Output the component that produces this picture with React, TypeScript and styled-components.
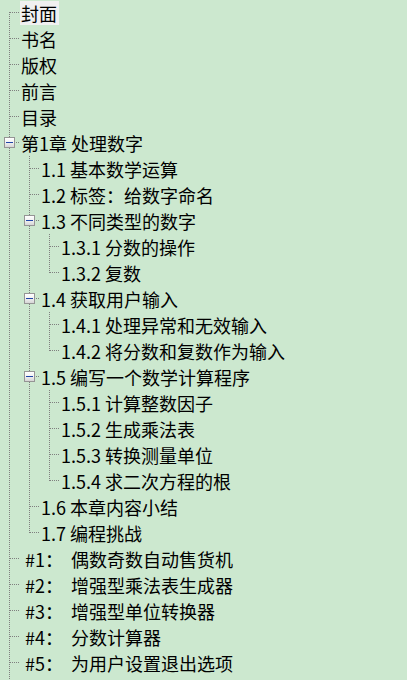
import React from "react";
import styled, { createGlobalStyle, css } from "styled-components";

type TreeNode = {
  label: string;
  children?: TreeNode[];
  expanded?: boolean;
  selected?: boolean;
};

type GuideKind = "blank" | "pipe" | "first" | "tee" | "elbow";

const ROW = 26;
const INDENT = 20;
const LINE_X = 9;
const DOT = "#7f7f7f";

const GlobalStyle = createGlobalStyle`
  html, body {
    margin: 0;
    padding: 0;
    overflow: hidden;
    background: #cce8cf;
  }
  body {
    font-family: "Noto Sans CJK SC", "Noto Sans", sans-serif;
    color: #000;
  }
`;

const tree: TreeNode[] = [
  { label: "封面", selected: true },
  { label: "书名" },
  { label: "版权" },
  { label: "前言" },
  { label: "目录" },
  {
    label: "第1章 处理数字",
    expanded: true,
    children: [
      { label: "1.1 基本数学运算" },
      { label: "1.2 标签：给数字命名" },
      {
        label: "1.3 不同类型的数字",
        expanded: true,
        children: [{ label: "1.3.1 分数的操作" }, { label: "1.3.2 复数" }],
      },
      {
        label: "1.4 获取用户输入",
        expanded: true,
        children: [
          { label: "1.4.1 处理异常和无效输入" },
          { label: "1.4.2 将分数和复数作为输入" },
        ],
      },
      {
        label: "1.5 编写一个数学计算程序",
        expanded: true,
        children: [
          { label: "1.5.1 计算整数因子" },
          { label: "1.5.2 生成乘法表" },
          { label: "1.5.3 转换测量单位" },
          { label: "1.5.4 求二次方程的根" },
        ],
      },
      { label: "1.6 本章内容小结" },
      { label: "1.7 编程挑战" },
    ],
  },
  { label: " #1：  偶数奇数自动售货机" },
  { label: " #2：  增强型乘法表生成器" },
  { label: " #3：  增强型单位转换器" },
  { label: " #4：  分数计算器" },
  { label: " #5：  为用户设置退出选项" },
  {
    label: "第2章 以图形可视化数据",
    children: [{ label: "2.1 理解笛卡尔坐标平面" }],
  },
];

const vDots = `repeating-linear-gradient(to bottom, ${DOT} 0 1px, transparent 1px 2px)`;
const hDots = `repeating-linear-gradient(to right, ${DOT} 0 1px, transparent 1px 2px)`;

const guideLines: Record<GuideKind, ReturnType<typeof css> | string> = {
  blank: "",
  pipe: css`
    background-image: ${vDots};
    background-size: 1px 100%;
    background-position: ${LINE_X}px 0;
  `,
  first: css`
    background-image: ${vDots}, ${hDots};
    background-size: 1px ${ROW - 12}px, ${INDENT - LINE_X - 1}px 1px;
    background-position: ${LINE_X}px 12px, ${LINE_X + 1}px 12px;
  `,
  tee: css`
    background-image: ${vDots}, ${hDots};
    background-size: 1px 100%, ${INDENT - LINE_X - 1}px 1px;
    background-position: ${LINE_X}px 0, ${LINE_X + 1}px 12px;
  `,
  elbow: css`
    background-image: ${vDots}, ${hDots};
    background-size: 1px 13px, ${INDENT - LINE_X - 1}px 1px;
    background-position: ${LINE_X}px 0, ${LINE_X + 1}px 12px;
  `,
};

const TreeList = styled.div`
  display: flex;
  flex-direction: column;
`;

const Row = styled.div`
  display: flex;
  align-items: center;
  height: ${ROW}px;
  white-space: pre;
`;

const Guide = styled.span<{ $kind: GuideKind }>`
  flex: none;
  width: ${INDENT}px;
  height: 100%;
  display: flex;
  align-items: center;
  padding-left: ${LINE_X - 5}px;
  box-sizing: border-box;
  background-repeat: no-repeat;
  ${(p) => guideLines[p.$kind]}
`;

const Toggle = styled.span`
  width: 11px;
  height: 11px;
  margin-top: -1px;
  box-sizing: border-box;
  border: 1px solid #959595;
  background: linear-gradient(to bottom, #ffffff 0%, #f2f2f2 45%, #d6d6d6 100%);
  display: flex;
  align-items: center;
  justify-content: center;
`;

const Label = styled.span<{ $selected?: boolean }>`
  height: 24px;
  line-height: 24px;
  padding: 0 2px 0 1px;
  font-size: 18px;
  background: ${(p) => (p.$selected ? "#f0f0f0" : "transparent")};
`;

function ToggleBox({ open }: { open: boolean }) {
  return (
    <Toggle>
      <svg width="7" height="7" viewBox="0 0 7 7">
        <rect x="0" y="3" width="7" height="1" fill="#1f45a8" />
        {!open && <rect x="3" y="0" width="1" height="7" fill="#1f45a8" />}
      </svg>
    </Toggle>
  );
}

type FlatRow = {
  node: TreeNode;
  guides: GuideKind[];
};

function flatten(nodes: TreeNode[], trail: boolean[], root: boolean): FlatRow[] {
  const out: FlatRow[] = [];
  nodes.forEach((node, i) => {
    const last = i === nodes.length - 1;
    const own: GuideKind = root && i === 0 ? "first" : last ? "elbow" : "tee";
    const guides: GuideKind[] = [...trail.map((more) => (more ? "pipe" : "blank") as GuideKind), own];
    out.push({ node, guides });
    if (node.children && node.expanded) {
      out.push(...flatten(node.children, [...trail, !last], false));
    }
  });
  return out;
}

export default function App() {
  const rows = flatten(tree, [], true);
  return (
    <>
      <GlobalStyle />
      <TreeList>
        {rows.map(({ node, guides }, idx) => (
          <Row key={idx}>
            {guides.map((kind, g) => (
              <Guide key={g} $kind={kind}>
                {g === guides.length - 1 && node.children && (
                  <ToggleBox open={!!node.expanded} />
                )}
              </Guide>
            ))}
            <Label $selected={node.selected}>{node.label}</Label>
          </Row>
        ))}
      </TreeList>
    </>
  );
}
